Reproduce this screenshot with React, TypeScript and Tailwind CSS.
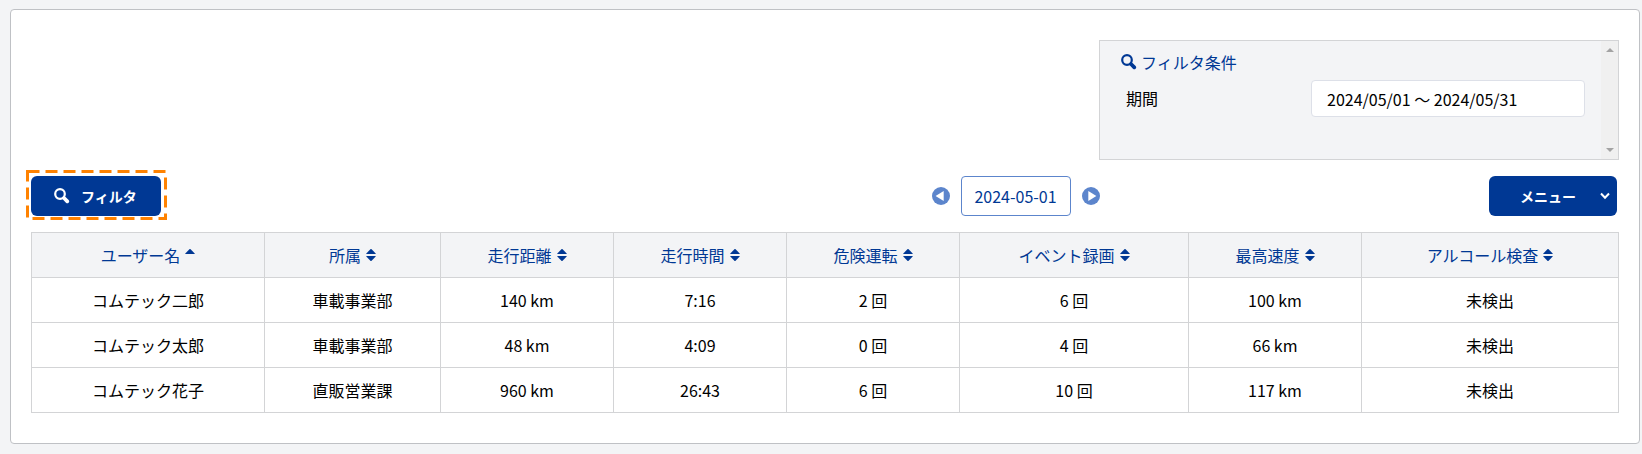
const columns = [
  { title: "ユーザー名", width: "w-[233px]", sorted: true },
  { title: "所属", width: "w-[176px]" },
  { title: "走行距離", width: "w-[173px]" },
  { title: "走行時間", width: "w-[173px]" },
  { title: "危険運転", width: "w-[173px]" },
  { title: "イベント録画", width: "w-[229px]" },
  { title: "最高速度", width: "w-[173px]" },
  { title: "アルコール検査", width: "w-auto" },
];

const rows = [
  ["コムテック二郎", "車載事業部", "140 km", "7:16", "2 回", "6 回", "100 km", "未検出"],
  ["コムテック太郎", "車載事業部", "48 km", "4:09", "0 回", "4 回", "66 km", "未検出"],
  ["コムテック花子", "直販営業課", "960 km", "26:43", "6 回", "10 回", "117 km", "未検出"],
];

const SearchIcon = () => (
  <svg width="16" height="16" viewBox="0 0 16 16" fill="none" aria-hidden="true">
    <circle cx="6" cy="6" r="4.8" stroke="currentColor" strokeWidth="2.2" />
    <path d="M10 10L13.3 13.3" stroke="currentColor" strokeWidth="3.8" strokeLinecap="round" />
  </svg>
);

const SortIcon = ({ sorted }: { sorted?: boolean }) => (
  <svg width="10" height="12" viewBox="0 0 10 12" fill="currentColor" aria-hidden="true">
    <path d="M4.4.3Q5-.2 5.6.3L9.7 4.4Q10 5 9.3 5H.7Q0 5 .3 4.4Z" />
    {!sorted && <path d="M4.4 11.7Q5 12.2 5.6 11.7L9.7 7.6Q10 7 9.3 7H.7Q0 7 .3 7.6Z" />}
  </svg>
);

const ArrowIcon = ({ className }: { className?: string }) => (
  <svg width="18" height="18" viewBox="0 0 18 18" className={className} aria-hidden="true">
    <circle cx="9" cy="9" r="9" fill="#5c85cc" />
    <path d="M6.3 4.1V13.9L14.4 9Z" fill="#fff" />
  </svg>
);

const FilterPanel = () => (
  <section className="flex h-[120px] w-[520px] border border-[#d3d4d6] bg-[#f3f4f6]">
    <div className="flex-1 pt-[7px] pr-4 pl-[21px]">
      <h2 className="flex h-7 items-center gap-1 text-[#003894]">
        <SearchIcon />
        フィルタ条件
      </h2>
      <div className="mt-1 flex items-center">
        <label htmlFor="period" className="flex-1 pb-[2px] pl-[5px]">期間</label>
        <input
          id="period"
          readOnly
          defaultValue="2024/05/01 ～ 2024/05/31"
          className="h-[37px] w-[274px] rounded border border-[#dde0e8] bg-white px-[15px] outline-none"
        />
      </div>
    </div>
    <div className="flex w-[17px] flex-col items-center justify-between bg-[#f0f0f0] py-[7px] text-[#a3a3a3]">
      <svg width="8" height="4" viewBox="0 0 8 4" fill="currentColor" aria-hidden="true"><path d="M0 4L4 0L8 4Z" /></svg>
      <svg width="8" height="4" viewBox="0 0 8 4" fill="currentColor" aria-hidden="true"><path d="M0 0L4 4L8 0Z" /></svg>
    </div>
  </section>
);

const Toolbar = () => (
  <div className="my-4 grid grid-cols-[43fr_38fr_19fr] items-center">
    <div className="relative h-10 w-[130px]">
      <button type="button" className="flex h-10 w-full items-center gap-[11px] rounded-md bg-[#003894] pl-[23px] text-sm font-bold text-white">
        <SearchIcon />
        フィルタ
      </button>
      <svg width="141" height="50" className="pointer-events-none absolute -top-[6px] -left-[5px]" aria-hidden="true">
        <path d="M1.5 1.5H139.5V48.5H1.5Z" fill="none" stroke="#ff8200" strokeWidth="3" strokeDasharray="12 6" />
      </svg>
    </div>
    <div className="flex items-center justify-center gap-[11px]">
      <button type="button" aria-label="前の日">
        <ArrowIcon className="rotate-180" />
      </button>
      <button type="button" className="h-10 w-[110px] rounded border border-[#5c85cc] text-[#003894]">
        2024-05-01
      </button>
      <button type="button" aria-label="次の日">
        <ArrowIcon />
      </button>
    </div>
    <button type="button" className="mr-[2px] flex h-10 w-32 items-center justify-end justify-self-end rounded-md bg-[#003894] pr-[7px] text-sm font-bold text-white">
      <span className="mr-6">メニュー</span>
      <svg width="10" height="8" viewBox="0 0 10 8" fill="none" aria-hidden="true">
        <path d="M1 1.5L5 5.7L9 1.5" stroke="currentColor" strokeWidth="2" />
      </svg>
    </button>
  </div>
);

const App = () => {
  return (
    <div className="min-h-screen bg-[#f3f4f6] pt-[9px] pr-[2px] pb-[10px] pl-[10px] font-['Noto_Sans_CJK_JP','Noto_Sans',sans-serif] text-base text-black">
      <main className="rounded border border-[#bfc1c5] bg-white px-5 pt-[30px] pb-[30px]">
        <div className="flex justify-end">
          <FilterPanel />
        </div>
        <Toolbar />
        <table className="w-full table-fixed border-collapse text-center">
          <thead>
            <tr className="h-[45px] bg-[#f3f4f6]">
              {columns.map((column) => (
                <th key={column.title} scope="col" className={`${column.width} border border-[#d3d4d6] p-0 font-normal text-[#003894]`}>
                  <button type="button" className="inline-flex items-center gap-[5px]">
                    {column.title}
                    <SortIcon sorted={column.sorted} />
                  </button>
                </th>
              ))}
            </tr>
          </thead>
          <tbody>
            {rows.map((row) => (
              <tr key={row[0]} className="h-[45px]">
                {row.map((cell, index) => (
                  <td key={index} className="border border-[#d3d4d6] p-0">{cell}</td>
                ))}
              </tr>
            ))}
          </tbody>
        </table>
      </main>
    </div>
  );
};

export default App;
